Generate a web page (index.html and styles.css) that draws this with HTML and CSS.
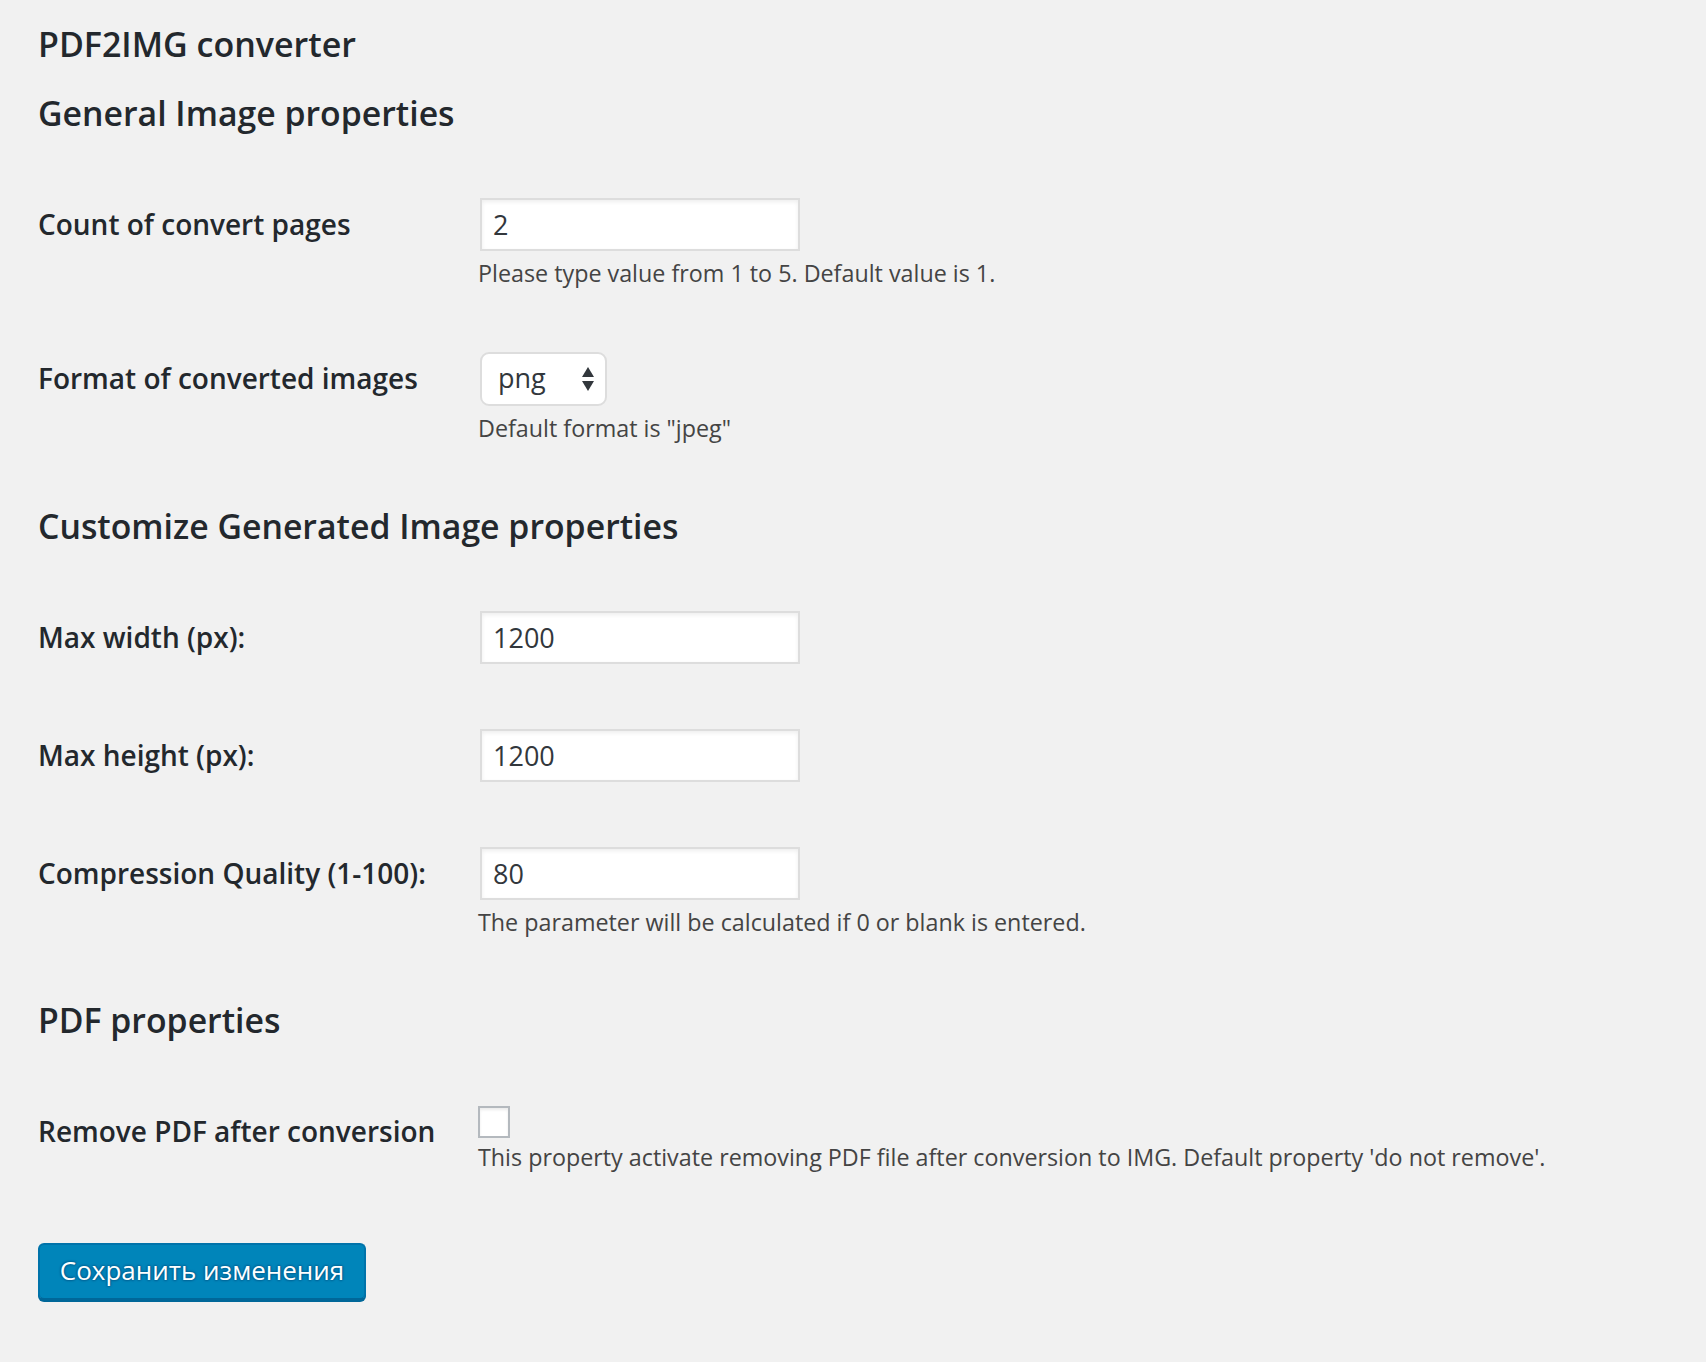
FILE: index.html
```html
<!DOCTYPE html>
<html lang="en">
<head>
<meta charset="utf-8">
<title>PDF2IMG converter</title>
<link rel="stylesheet" href="styles.css">
</head>
<body>
<div class="wrap">
  <h1 class="page-title">PDF2IMG converter</h1>
  <form class="settings">
    <h2 class="section-title">General Image properties</h2>
    <div class="form-table">
      <div class="row">
        <label class="label" for="pages">Count of convert pages</label>
        <div class="field">
          <input class="text-input" id="pages" type="text" value="2">
          <p class="description">Please type value from 1 to 5. Default value is 1.</p>
        </div>
      </div>
      <div class="row">
        <label class="label">Format of converted images</label>
        <div class="field">
          <div class="select">
            <span class="select-value">png</span>
            <svg class="select-arrows" width="14" height="26" viewBox="0 0 14 26"><path d="M7 1 L13 11 L1 11 Z" fill="#32373c"/><path d="M1 15 L13 15 L7 25 Z" fill="#32373c"/></svg>
          </div>
          <p class="description">Default format is "jpeg"</p>
        </div>
      </div>
    </div>

    <h2 class="section-title">Customize Generated Image properties</h2>
    <div class="form-table">
      <div class="row">
        <label class="label" for="maxw">Max width (px):</label>
        <div class="field"><input class="text-input" id="maxw" type="text" value="1200"></div>
      </div>
      <div class="row">
        <label class="label" for="maxh">Max height (px):</label>
        <div class="field"><input class="text-input" id="maxh" type="text" value="1200"></div>
      </div>
      <div class="row">
        <label class="label" for="quality">Compression Quality (1-100):</label>
        <div class="field">
          <input class="text-input" id="quality" type="text" value="80">
          <p class="description">The parameter will be calculated if 0 or blank is entered.</p>
        </div>
      </div>
    </div>

    <h2 class="section-title">PDF properties</h2>
    <div class="form-table">
      <div class="row">
        <label class="label" for="remove">Remove PDF after conversion</label>
        <div class="field">
          <span class="checkbox" id="remove"></span>
          <p class="description desc-check">This property activate removing PDF file after conversion to IMG. Default property 'do not remove'.</p>
        </div>
      </div>
    </div>

    <p class="submit"><button type="button" class="button-primary">Сохранить изменения</button></p>
  </form>
</div>
</body>
</html>
```
FILE: styles.css
```css
html, body {
  margin: 0;
  padding: 0;
  background: #f1f1f1;
}
body {
  font-family: "Open Sans", "Noto Sans", sans-serif;
  color: #23282d;
  min-height: 1362px;
}
.wrap {
  padding: 24px 38px 0 38px;
}
.page-title {
  margin: 0;
  font-size: 34px;
  line-height: 40px;
  font-weight: 600;
  color: #23282d;
}
.section-title {
  margin: 64px 0 0 0;
  font-size: 33.8px;
  line-height: 40px;
  font-weight: 600;
  color: #23282d;
}
.page-title + .settings .section-title:first-child {
  margin-top: 29px;
}
.form-table {
  margin-top: 65px;
  display: flex;
  flex-direction: column;
  gap: 65px;
}
.row {
  display: grid;
  grid-template-columns: 442px 1fr;
  align-items: start;
}
.label {
  padding-top: 8px;
  font-size: 28px;
  line-height: 36px;
  font-weight: 600;
  color: #23282d;
}
.field {
  display: flex;
  flex-direction: column;
  align-items: flex-start;
}
.text-input {
  box-sizing: border-box;
  width: 320px;
  height: 53px;
  margin: 0;
  padding: 0 11px;
  border: 2px solid #ddd;
  border-radius: 0;
  background: #fff;
  box-shadow: inset 0 2px 4px rgba(0, 0, 0, 0.07);
  font-family: "Open Sans", "Noto Sans", sans-serif;
  font-size: 27px;
  color: #32373c;
  outline: none;
}
.select {
  box-sizing: border-box;
  width: 127px;
  height: 54px;
  border: 2px solid #ddd;
  border-radius: 9px;
  background: #fff;
  display: flex;
  align-items: center;
  justify-content: space-between;
  padding: 0 10px 0 16px;
  font-size: 27px;
  color: #32373c;
}
.select-value {
  line-height: 1;
  padding-bottom: 4px;
}
.description {
  margin: 8px 0 0 -2px;
  font-size: 23.3px;
  line-height: 28px;
  color: #444;
}
.checkbox {
  display: block;
  box-sizing: border-box;
  width: 32px;
  height: 32px;
  margin: 1px 0 0 -2px;
  border: 2px solid #b4b9be;
  background: #fff;
  box-shadow: inset 0 2px 3px rgba(0, 0, 0, 0.08);
}
.desc-check {
  margin-top: 5px;
}
.submit {
  margin: 72px 0 0 0;
  padding: 0;
}
.button-primary {
  box-sizing: border-box;
  height: 57px;
  width: 328px;
  padding: 0 0 3px 0;
  margin: 0;
  white-space: nowrap;
  text-align: center;
  border: 2px solid #0073aa;
  border-bottom-color: #006799;
  border-radius: 6px;
  background: #0085ba;
  box-shadow: 0 2px 0 #006799;
  color: #fff;
  font-family: "Open Sans", "Noto Sans", sans-serif;
  font-size: 26px;
  font-weight: 400;
  text-shadow: 0 -1px 2px #006799, 1px 0 2px #006799, 0 1px 2px #006799, -1px 0 2px #006799;
}
```
